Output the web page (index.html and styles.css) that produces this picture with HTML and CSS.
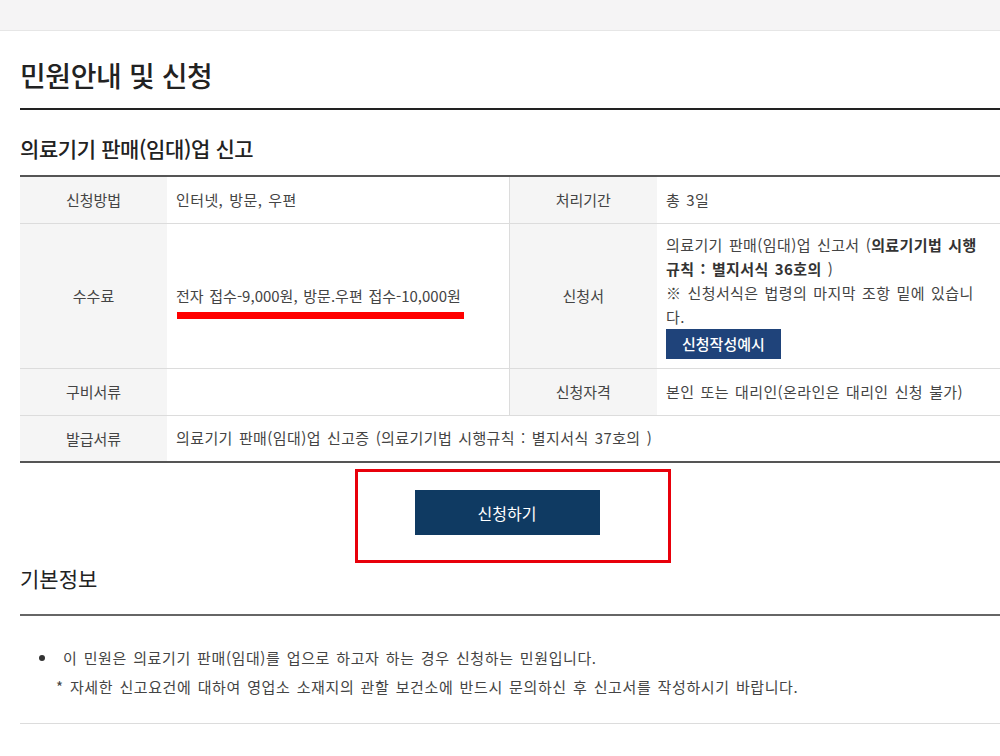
FILE: index.html
```html
<!DOCTYPE html>
<html lang="ko">
<head>
<meta charset="utf-8">
<title>민원안내 및 신청</title>
<link rel="stylesheet" href="styles.css">
</head>
<body>
<div class="topbar"></div>
<main class="page">
  <h1 class="title">민원안내 및 신청</h1>
  <h2 class="subtitle">의료기기 판매(임대)업 신고</h2>
  <table class="info">
    <colgroup>
      <col class="c-th1"><col class="c-td1"><col class="c-th2"><col class="c-td2">
    </colgroup>
    <tbody>
      <tr class="r-short">
        <th>신청방법</th>
        <td>인터넷, 방문, 우편</td>
        <th class="th-right">처리기간</th>
        <td>총 3일</td>
      </tr>
      <tr class="r-tall">
        <th>수수료</th>
        <td><span class="fee">전자 접수-9,000원, 방문.우편 접수-10,000원</span></td>
        <th class="th-right">신청서</th>
        <td class="form-cell">
          <p class="form-text">의료기기 판매(임대)업 신고서 (<b>의료기기법 시행 규칙 : 별지서식 36호의</b> )</p>
          <p class="form-text">※ 신청서식은 법령의 마지막 조항 밑에 있습니다.</p>
          <button class="btn-example" type="button">신청작성예시</button>
        </td>
      </tr>
      <tr class="r-short">
        <th>구비서류</th>
        <td></td>
        <th class="th-right">신청자격</th>
        <td>본인 또는 대리인(온라인은 대리인 신청 불가)</td>
      </tr>
      <tr class="r-short r-last">
        <th>발급서류</th>
        <td colspan="3">의료기기 판매(임대)업 신고증 (의료기기법 시행규칙 : 별지서식 37호의 )</td>
      </tr>
    </tbody>
  </table>
  <div class="action">
    <button class="btn-apply" type="button">신청하기</button>
    <span class="mark"></span>
  </div>
  <h2 class="section">기본정보</h2>
  <div class="basic">
    <ul class="basic-list">
      <li>이 민원은 의료기기 판매(임대)를 업으로 하고자 하는 경우 신청하는 민원입니다.</li>
    </ul>
    <p class="basic-note">* 자세한 신고요건에 대하여 영업소 소재지의 관할 보건소에 반드시 문의하신 후 신고서를 작성하시기 바랍니다.</p>
  </div>
</main>
</body>
</html>
```

FILE: styles.css
```css
* { box-sizing: border-box; }
html, body { margin: 0; padding: 0; }
body {
  background: #fff;
  color: #333;
  font-family: "Noto Sans CJK KR", "Noto Sans", sans-serif;
  font-size: 15px;
  overflow: hidden;
}
.topbar {
  height: 31px;
  background: #f5f4f5;
  border-bottom: 1px solid #e6e6e6;
}
.page {
  padding-left: 20px;
  width: 1000px;
}
.title {
  margin: 0;
  padding: 24px 0 13px;
  font-size: 28px;
  line-height: 40px;
  font-weight: 500;
  color: #222;
  letter-spacing: -0.4px;
  border-bottom: 2px solid #222;
}
.subtitle {
  margin: 23px 0 12px;
  font-size: 21px;
  line-height: 30px;
  font-weight: 500;
  color: #222;
  letter-spacing: -0.4px;
}
.info {
  width: 980px;
  border-collapse: collapse;
  table-layout: fixed;
  border-top: 2px solid #555;
  border-bottom: 2px solid #555;
}
.c-th1 { width: 147px; }
.c-td1 { width: 342px; }
.c-th2 { width: 148px; }
.c-td2 { width: 343px; }
.info tr { border-bottom: 1px solid #dcdcdc; }
.info tr.r-last { border-bottom: none; }
.info th {
  background: #f5f5f5;
  font-weight: 400;
  color: #444;
  text-align: center;
  padding: 0;
}
.info th.th-right { border-left: 1px solid #dcdcdc; }
.info td {
  padding: 0 10px 0 9px;
  color: #444;
  line-height: 24px;
  word-spacing: 1.5px;
  letter-spacing: 0.4px;
}
.r-short { height: 47px; }
.r-last { height: 47px; }
.r-tall { height: 145px; }
.fee {
  position: relative;
  display: inline-block;
  letter-spacing: 0;
}
.fee::after {
  content: "";
  position: absolute;
  left: 1px;
  right: -3px;
  top: calc(100% + 4px);
  height: 7px;
  background: #f00;
}
.info td.form-cell { padding: 9px 17px 8px 9px; vertical-align: top; }
.form-text { margin: 0; line-height: 24px; }
.form-text b { font-weight: 700; color: #333; }
.btn-example {
  display: block;
  height: 30px;
  padding: 0 16px;
  border: none;
  background: #1f437a;
  color: #fff;
  font-family: inherit;
  font-size: 15px;
  font-weight: 500;
  word-spacing: 0;
  letter-spacing: 0;
}
.action {
  position: relative;
  display: flex;
  justify-content: center;
  padding-top: 27px;
  width: 980px;
}
.btn-apply {
  width: 185px;
  height: 45px;
  border: none;
  background: #0f3a62;
  color: #fff;
  font-family: inherit;
  font-size: 16px;
  margin-left: -6px;
}
.mark {
  position: absolute;
  left: 335px;
  top: 6px;
  width: 316px;
  height: 94px;
  border: 3px solid #e8000b;
}
.section {
  margin: 29px 0 0;
  padding-bottom: 22px;
  font-size: 21px;
  line-height: 28px;
  font-weight: 400;
  color: #222;
  border-bottom: 2px solid #666;
}
.basic {
  padding: 27px 0 22px;
  border-bottom: 1px solid #dcdcdc;
  color: #444;
  font-size: 15px;
  line-height: 29px;
  word-spacing: 1.5px;
  letter-spacing: 0.6px;
}
.basic-list {
  margin: 0;
  padding: 0 0 0 19px;
  list-style: none;
}
.basic-list li {
  display: flex;
  align-items: center;
}
.basic-list li::before {
  content: "";
  flex: none;
  width: 6px;
  height: 6px;
  border-radius: 50%;
  background: #333;
  margin-right: 18px;
}
.basic-note {
  margin: 0;
  padding-left: 36px;
}
```
